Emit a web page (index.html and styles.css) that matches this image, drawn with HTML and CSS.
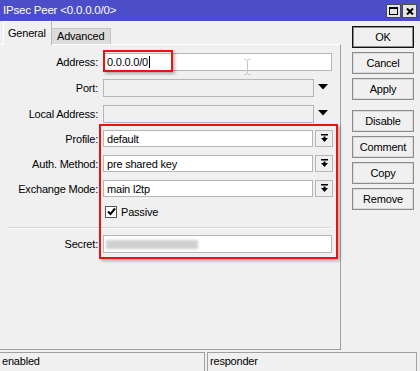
FILE: index.html
```html
<!DOCTYPE html>
<html>
<head>
<meta charset="utf-8">
<link rel="stylesheet" href="styles.css">
</head>
<body>
<div class="window">
  <div class="titlebar">
    <span class="title">IPsec Peer &lt;0.0.0.0/0&gt;</span>
    <div class="wbtns">
      <span class="wbtn"><svg width="9" height="8" viewBox="0 0 9 8"><rect x="0.5" y="0.5" width="8" height="7" fill="none" stroke="#000" stroke-width="1"/><rect x="0" y="0" width="9" height="2" fill="#000"/></svg></span>
      <span class="wbtn"><svg width="8" height="7" viewBox="0 0 8 7"><path d="M1 0.5 L7 6.5 M7 0.5 L1 6.5" stroke="#000" stroke-width="2"/></svg></span>
    </div>
  </div>
  <div class="main">
    <div class="left">
      <div class="tabs">
        <div class="tab active">General</div>
        <div class="tab adv">Advanced</div>
      </div>
      <div class="panel">
        <div class="row r-addr">
          <span class="label">Address:</span>
          <div class="input wide"><span class="val">0.0.0.0/0</span><span class="caret"></span></div>
        </div>
        <div class="row r-gap8">
          <span class="label">Port:</span>
          <div class="input dis"></div>
          <span class="arrow"><svg width="10" height="6" viewBox="0 0 10 6"><path d="M0 0 H10 L5 5.5 Z" fill="#000"/></svg></span>
        </div>
        <div class="row r-gap8">
          <span class="label">Local Address:</span>
          <div class="input dis"></div>
          <span class="arrow"><svg width="10" height="6" viewBox="0 0 10 6"><path d="M0 0 H10 L5 5.5 Z" fill="#000"/></svg></span>
        </div>
        <div class="row sel r-gap7">
          <span class="label">Profile:</span>
          <div class="input"><span class="val">default</span></div>
          <span class="ddbtn"><svg width="9" height="9" viewBox="0 0 9 9"><rect x="1" y="0" width="7" height="1.5" fill="#000"/><rect x="3.5" y="2.5" width="2" height="2" fill="#000"/><path d="M1 4 H8 L4.5 8 Z" fill="#000"/></svg></span>
        </div>
        <div class="row sel r-gap8">
          <span class="label">Auth. Method:</span>
          <div class="input"><span class="val">pre shared key</span></div>
          <span class="ddbtn"><svg width="9" height="9" viewBox="0 0 9 9"><rect x="1" y="0" width="7" height="1.5" fill="#000"/><rect x="3.5" y="2.5" width="2" height="2" fill="#000"/><path d="M1 4 H8 L4.5 8 Z" fill="#000"/></svg></span>
        </div>
        <div class="row sel r-gap8">
          <span class="label">Exchange Mode:</span>
          <div class="input"><span class="val">main l2tp</span></div>
          <span class="ddbtn"><svg width="9" height="9" viewBox="0 0 9 9"><rect x="1" y="0" width="7" height="1.5" fill="#000"/><rect x="3.5" y="2.5" width="2" height="2" fill="#000"/><path d="M1 4 H8 L4.5 8 Z" fill="#000"/></svg></span>
        </div>
        <div class="row check-row">
          <span class="label"></span>
          <span class="checkbox"><svg width="9" height="9" viewBox="0 0 9 9"><path d="M1 4.5 L3.5 7 L8 1.5" fill="none" stroke="#000" stroke-width="2"/></svg></span>
          <span class="check-label">Passive</span>
        </div>
        <div class="sep"></div>
        <div class="row r-secret">
          <span class="label">Secret:</span>
          <div class="input wide"><span class="blur"></span></div>
        </div>
        <div class="mark mark-addr"></div>
        <div class="mark mark-group"></div>
        <svg class="ibeam" width="7" height="16" viewBox="0 0 7 16"><path d="M0.5 0.5 H2.5 L3.5 1.5 L4.5 0.5 H6.5 M3.5 1.5 V14.5 M0.5 15.5 H2.5 L3.5 14.5 L4.5 15.5 H6.5" fill="none" stroke="#c4c4c4" stroke-width="1"/></svg>
      </div>
    </div>
    <div class="buttons">
      <div class="btn default">OK</div>
      <div class="btn">Cancel</div>
      <div class="btn">Apply</div>
      <div class="btn spaced">Disable</div>
      <div class="btn">Comment</div>
      <div class="btn">Copy</div>
      <div class="btn">Remove</div>
    </div>
  </div>
  <div class="status">
    <div class="field f1">enabled</div>
    <div class="field f2">responder</div>
  </div>
</div>
</body>
</html>
```

FILE: styles.css
```css
html, body {
  margin: 0;
  padding: 0;
  background: #f0f0f0;
}
body {
  font-family: "Liberation Sans", Arial, sans-serif;
  font-size: 11px;
  letter-spacing: -0.2px;
  color: #000;
}
.window {
  width: 420px;
  height: 371px;
  display: flex;
  flex-direction: column;
  overflow: hidden;
}
.titlebar {
  height: 21px;
  flex: none;
  background: #4b4ec8;
  color: #fff;
  display: flex;
  align-items: center;
  justify-content: space-between;
  padding: 0 3px 0 3px;
  box-sizing: border-box;
}
.title {
  font-size: 11.5px;
  margin-top: -1px;
}
.wbtns {
  display: flex;
  gap: 1px;
  margin-top: 1px;
}
.wbtn {
  width: 15px;
  height: 14px;
  box-sizing: border-box;
  background: #e4e4e4;
  border: 1px solid #4a4a4a;
  display: flex;
  align-items: center;
  justify-content: center;
}
.main {
  display: flex;
  height: 330px;
  flex: none;
}
.left {
  width: 341px;
  display: flex;
  flex-direction: column;
}
.tabs {
  height: 23px;
  display: flex;
  align-items: flex-end;
  padding-left: 3px;
  position: relative;
  z-index: 1;
}
.tab {
  box-sizing: border-box;
}
.tab.active {
  height: 24px;
  width: 49px;
  margin-bottom: -1px;
  background: #f0f0f0;
  border-top: 1px solid #fff;
  border-left: 1px solid #fff;
  border-right: 1px solid #b8b8b8;
  padding: 5px 0 0 4px;
}
.tab.adv {
  height: 16px;
  width: 59px;
  background: #dcdcdc;
  border: 1px solid #c4c4c4;
  border-left: none;
  border-bottom: none;
  padding: 1px 0 0 5px;
}
.panel {
  height: 306px;
  box-sizing: border-box;
  border-top: 1px solid #fff;
  border-right: 1px solid #a0a0a0;
  border-bottom: 1px solid #a0a0a0;
  position: relative;
  padding-top: 8px;
}
.row {
  display: flex;
  align-items: center;
  height: 18px;
}
.row.sel {
  height: 17px;
}
.r-gap8 { margin-top: 8px; }
.r-gap7 { margin-top: 7px; }
.label {
  width: 103px;
  flex: none;
  box-sizing: border-box;
  padding-right: 5px;
  text-align: right;
}
.input {
  box-sizing: border-box;
  height: 100%;
  width: 210px;
  border: 1px solid #b6b6b6;
  background: #fff;
  display: flex;
  align-items: center;
  padding-left: 3px;
  position: relative;
}
.input.wide {
  width: 229px;
}
.input.dis {
  width: 211px;
  background: #f0f0f0;
}
.caret {
  width: 1px;
  height: 12px;
  background: #000;
  margin-left: 1px;
}
.arrow {
  width: 18px;
  display: flex;
  justify-content: center;
  margin-top: -2px;
}
.ddbtn {
  box-sizing: border-box;
  width: 18px;
  height: 17px;
  margin-left: 2px;
  border: 1px solid #b6b6b6;
  background: #f0f0f0;
  display: flex;
  align-items: center;
  justify-content: center;
}
.check-row {
  margin-top: 8px;
  height: 13px;
}
.checkbox {
  box-sizing: border-box;
  width: 12px;
  height: 12px;
  margin-left: 2px;
  border: 1px solid #555;
  background: #fff;
  display: flex;
  align-items: center;
  justify-content: center;
}
.check-label {
  margin-left: 4px;
}
.sep {
  margin: 9px 10px 0 8px;
  height: 1px;
  background: #d6d6d6;
  border-bottom: 1px solid #fafafa;
}
.r-secret {
  margin-top: 6px;
}
.blur {
  display: block;
  width: 92px;
  height: 9px;
  background: #cfcfcf;
  filter: blur(1.5px);
  margin-left: -1px;
}
.mark {
  position: absolute;
  box-sizing: border-box;
  border: 2px solid #ee1111;
  box-shadow: 2px 2px 3px rgba(0, 0, 0, 0.28);
  pointer-events: none;
}
.mark-addr {
  left: 103px;
  top: 5px;
  width: 70px;
  height: 22px;
}
.mark-group {
  left: 99px;
  top: 79px;
  width: 239px;
  height: 135px;
}
.ibeam {
  position: absolute;
  left: 244px;
  top: 14px;
}
.buttons {
  margin-left: 11px;
  padding-top: 5px;
  width: 62px;
  display: flex;
  flex-direction: column;
  gap: 4px;
}
.btn {
  height: 22px;
  box-sizing: border-box;
  border: 1px solid #8c8c8c;
  box-shadow: inset 0 0 0 1px #dadada;
  background: #f0f0f0;
  display: flex;
  align-items: center;
  justify-content: center;
}
.btn.default {
  border-color: #111;
  box-shadow: inset 0 0 0 1px #8c8c8c;
}
.btn.spaced {
  margin-top: 6px;
}
.status {
  display: flex;
  margin-top: 1px;
  height: 19px;
}
.field {
  box-sizing: border-box;
  height: 19px;
  border-top: 1px solid #a0a0a0;
  padding: 2px 0 0 2px;
}
.f1 {
  width: 205px;
  border-right: 1px solid #a0a0a0;
}
.f2 {
  width: 210px;
  margin-left: 2px;
  border-left: 1px solid #a0a0a0;
  border-right: 1px solid #a0a0a0;
}
```
